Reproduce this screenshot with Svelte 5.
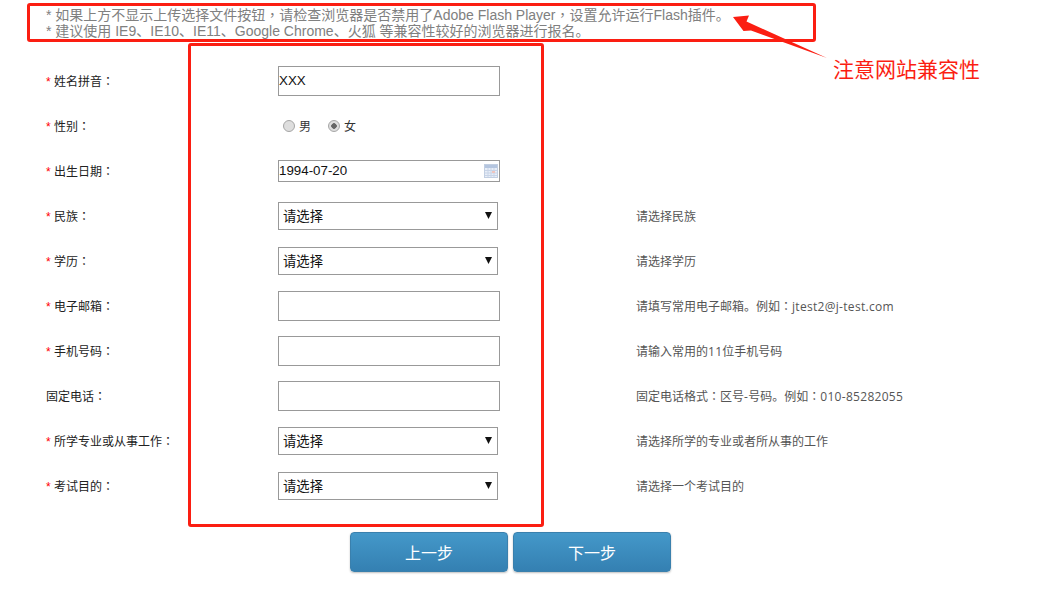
<script>
  const rows = [
    { label: '姓名拼音：', req: true, type: 'text', value: 'XXX', hint: '' },
    { label: '性别：', req: true, type: 'radio', hint: '' },
    { label: '出生日期：', req: true, type: 'date', value: '1994-07-20', hint: '' },
    { label: '民族：', req: true, type: 'select', hint: '请选择民族' },
    { label: '学历：', req: true, type: 'select', hint: '请选择学历' },
    { label: '电子邮箱：', req: true, type: 'text', value: '', hint: '请填写常用电子邮箱。例如：jtest2@j-test.com' },
    { label: '手机号码：', req: true, type: 'text', value: '', hint: '请输入常用的11位手机号码' },
    { label: '固定电话：', req: false, type: 'text', value: '', hint: '固定电话格式：区号-号码。例如：010-85282055' },
    { label: '所学专业或从事工作：', req: true, type: 'select', hint: '请选择所学的专业或者所从事的工作' },
    { label: '考试目的：', req: true, type: 'select', hint: '请选择一个考试目的' }
  ];
  const notices = [
    '* 如果上方不显示上传选择文件按钮，请检查浏览器是否禁用了Adobe Flash Player，设置允许运行Flash插件。',
    '* 建议使用 IE9、IE10、IE11、Google Chrome、火狐 等兼容性较好的浏览器进行报名。'
  ];
  // Fullwidth colon and comma sit centred in their cell in the reference.
  const parts = (s) => s.split(/([：，])/);
  const hintParts = (s) => s.split(/([：，]|[0-9A-Za-z@.\-]+)/);
</script>

{#snippet punct(text)}
  {#each parts(text) as part, i}{#if i % 2}<span class="centred">{part}</span>{:else}{part}{/if}{/each}
{/snippet}

{#snippet hintText(text)}
  {#each hintParts(text) as part, i}{#if i % 2}<span class={/[：，]/.test(part) ? 'centred' : 'latin'}>{part}</span>{:else}{part}{/if}{/each}
{/snippet}

<div class="page">
  <div class="notice">
    {#each notices as line}
      <p>{@render punct(line)}</p>
    {/each}
  </div>

  <form class="form">
    {#each rows as row}
      <div class="row">
        <div class="label">{#if row.req}<span class="star">*</span>{/if}{@render punct(row.label)}</div>
        <div class="control">
          {#if row.type === 'text'}
            <input class="field" type="text" value={row.value} />
          {:else if row.type === 'date'}
            <div class="datebox">
              <input class="field date" type="text" value={row.value} />
              <svg class="cal" width="14" height="14" viewBox="0 0 14 14">
                <rect x="0.5" y="0.5" width="13" height="13" fill="#e8eef8" stroke="#c2cfe2" />
                <rect x="1" y="1" width="12" height="3" fill="#b4c5df" />
                <path d="M1 6.5H13M1 9H13M1 11.5H13M4 4V13M7 4V13M10 4V13" stroke="#c8d4e7" stroke-width="1" fill="none" />
                <rect x="8" y="7" width="3" height="2" fill="#f0c4bd" />
              </svg>
            </div>
          {:else if row.type === 'select'}
            <div class="selectbox">
              <select class="select"><option>请选择</option></select>
              <svg class="caret" width="7" height="7" viewBox="0 0 7 7"><path d="M0 0H7L3.5 7Z" fill="#111" /></svg>
            </div>
          {:else}
            <div class="radios">
              <label class="radio"><input type="radio" name="sex" />男</label>
              <label class="radio"><input type="radio" name="sex" checked />女</label>
            </div>
          {/if}
        </div>
        <div class="hint">{@render hintText(row.hint)}</div>
      </div>
    {/each}

    <div class="actions">
      <button type="button" class="btn">上一步</button>
      <button type="button" class="btn">下一步</button>
    </div>
  </form>

  <div class="mark mark-notice"></div>
  <div class="mark mark-fields"></div>
  <svg class="arrow" width="110" height="60" viewBox="0 0 110 60">
    <path d="M3 17L19 15.5L16.5 21.5L97 58L21 30.5L13.5 31Z" fill="#fb1e12" />
  </svg>
  <div class="callout">注意网站兼容性</div>
</div>

<style>
  :global(body) {
    margin: 0;
    background: #fff;
  }
  .page {
    position: relative;
    width: 1053px;
    height: 589px;
    overflow: hidden;
    font-family: "Open Sans", "Noto Sans CJK SC", sans-serif;
    font-size: 12px;
    color: #333;
  }
  .centred {
    font-family: "Noto Sans CJK TC", sans-serif;
    line-height: 0;
  }
  .latin {
    letter-spacing: 0.3px;
  }
  .notice {
    padding: 7px 0 0 46px;
    font-family: "Liberation Sans", "Noto Sans CJK SC", sans-serif;
    font-size: 14px;
    line-height: 16px;
    color: #808080;
  }
  .notice p {
    margin: 0;
    height: 16px;
    white-space: nowrap;
  }
  .form {
    width: 1021px;
    margin-top: 19px;
  }
  .row {
    display: grid;
    grid-template-columns: 232px 358px 1fr;
    align-items: center;
    height: 45px;
    padding-left: 46px;
  }
  .label {
    margin-top: 2px;
    color: #222;
    white-space: nowrap;
    line-height: 16px;
    height: 16px;
  }
  .star {
    display: inline-block;
    width: 8px;
    font-family: "Liberation Sans", sans-serif;
    color: #f00;
  }
  .control {
    display: flex;
    align-items: center;
  }
  .field {
    box-sizing: border-box;
    width: 222px;
    height: 30px;
    padding: 0;
    border: 1px solid #999;
    border-radius: 0;
    outline: none;
    background: #fff;
    font-family: "Liberation Sans", sans-serif;
    font-size: 13.33px;
    color: #111;
  }
  .datebox {
    position: relative;
    display: flex;
  }
  .date {
    height: 22px;
  }
  .cal {
    position: absolute;
    right: 2px;
    top: 4px;
  }
  .selectbox {
    position: relative;
    display: flex;
  }
  .select {
    box-sizing: border-box;
    width: 220px;
    height: 28px;
    padding: 0 0 0 4px;
    border: 1px solid #999;
    border-radius: 0;
    outline: none;
    appearance: none;
    background: #fff;
    font-family: "Noto Sans CJK SC", sans-serif;
    font-size: 13.33px;
    color: #111;
  }
  .caret {
    position: absolute;
    right: 6px;
    top: 10px;
  }
  .radios {
    display: flex;
    gap: 17px;
    padding-left: 5px;
  }
  .radio {
    display: flex;
    align-items: center;
    gap: 4px;
    color: #333;
  }
  .radio input {
    box-sizing: border-box;
    width: 12px;
    height: 12px;
    margin: 0;
    appearance: none;
    border: 1px solid #a6a6a6;
    border-radius: 50%;
    background: #dedede;
  }
  .radio input:checked {
    background: radial-gradient(circle, #666 0 2.5px, #dedede 3px);
  }
  .hint {
    margin-top: 2px;
    color: #555;
    white-space: nowrap;
    line-height: 16px;
    height: 16px;
  }
  .actions {
    display: flex;
    justify-content: center;
    gap: 5px;
    margin-top: 24px;
  }
  .btn {
    box-sizing: border-box;
    width: 158px;
    height: 40px;
    padding: 0;
    border: 1px solid #3a80ad;
    border-radius: 4px;
    background: linear-gradient(#4498c9, #3480b2);
    box-shadow: 0 1px 2px rgba(0, 0, 0, 0.25);
    font-family: "Noto Sans CJK SC", sans-serif;
    font-size: 16px;
    color: #fff;
  }
  .mark {
    position: absolute;
    box-sizing: border-box;
    border: 3px solid #fb1e12;
    border-radius: 3px;
    pointer-events: none;
  }
  .mark-notice {
    left: 27px;
    top: 3px;
    width: 789px;
    height: 39px;
  }
  .mark-fields {
    left: 188px;
    top: 43px;
    width: 356px;
    height: 484px;
  }
  .arrow {
    position: absolute;
    left: 730px;
    top: 0;
  }
  .callout {
    position: absolute;
    left: 833px;
    top: 53px;
    font-family: "Noto Sans CJK SC", sans-serif;
    font-size: 21px;
    line-height: 30px;
    color: #fb1e12;
    white-space: nowrap;
  }
</style>
